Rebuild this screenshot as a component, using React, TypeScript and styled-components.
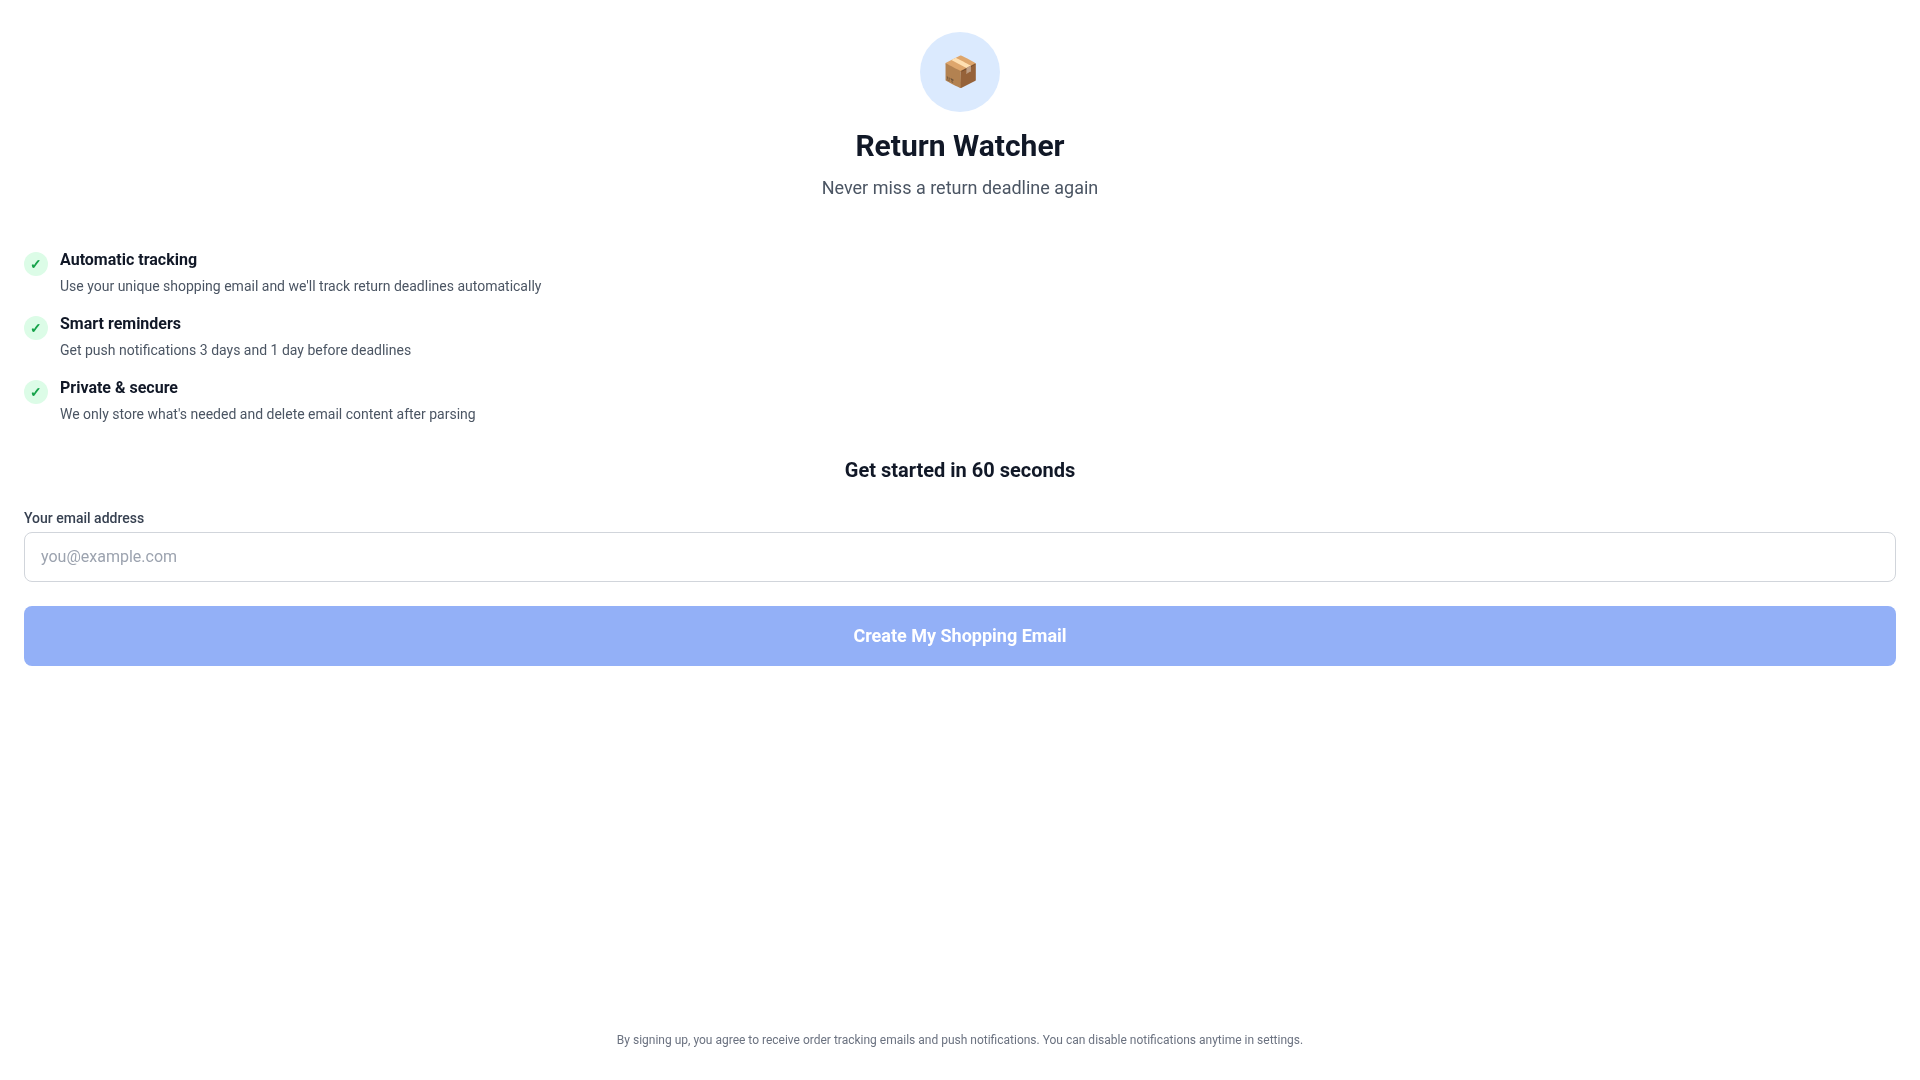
import React from "react";
import styled, { createGlobalStyle } from "styled-components";

const Global = createGlobalStyle`
  * { box-sizing: border-box; }
  html, body { margin: 0; padding: 0; background: #fff; }
  body { font-family: Roboto, "Liberation Sans", sans-serif; -webkit-font-smoothing: antialiased; }
`;
const Page = styled.div`
  min-height: 100vh; display: flex; flex-direction: column; padding: 32px 24px 32px; background: #fff;
  will-change: transform;
`;
const Header = styled.header`
  display: flex; flex-direction: column; align-items: center; margin-bottom: 46px;
`;
const IconCircle = styled.div`
  width: 80px; height: 80px; border-radius: 50%; background: #dbeafe;
  display: flex; align-items: center; justify-content: center; font-size: 30px; line-height: 1; margin-bottom: 16px;
`;
const Title = styled.h1`
  margin: 0 0 10px; font-size: 30px; line-height: 36px; font-weight: 700; color: #111827;
`;
const Subtitle = styled.p`
  margin: 0; font-size: 18px; line-height: 28px; color: #4b5563;
`;
const Features = styled.ul`
  list-style: none; margin: 0 0 32px; padding: 0; display: flex; flex-direction: column; gap: 16px;
`;
const Feature = styled.li`
  display: flex; gap: 12px; align-items: flex-start;
`;
const Check = styled.span`
  width: 24px; height: 24px; border-radius: 50%; background: #dcfce7; color: #16a34a; flex-shrink: 0;
  display: flex; align-items: center; justify-content: center; font-size: 14px; font-weight: 700; margin-top: 4px;
`;
const FeatureTitle = styled.div`
  font-size: 16px; line-height: 24px; font-weight: 700; color: #111827; margin-bottom: 4px;
`;
const FeatureText = styled.div`
  font-size: 14px; line-height: 20px; color: #4b5563;
`;
const SectionTitle = styled.h2`
  margin: 0 0 24px; text-align: center; font-size: 20px; line-height: 28px; font-weight: 700; color: #111827;
`;
const Label = styled.label`
  display: block; font-size: 14px; line-height: 20px; font-weight: 500; color: #374151; margin-bottom: 4px;
`;
const Input = styled.input`
  display: block; width: 100%; height: 50px; padding: 0 16px 2px; border: 1px solid #d1d5db; border-radius: 8px;
  font: 400 16px Roboto, sans-serif; color: #111827; background: #fff; margin-bottom: 24px; outline: none;
  &::placeholder { color: #9ca3af; opacity: 1; }
`;
const Submit = styled.button`
  display: block; width: 100%; height: 60px; border: 0; border-radius: 8px; background: #93b0f7; color: #fff;
  font: 700 18px Roboto, sans-serif; padding: 0 0 2px;
`;
const Footer = styled.p`
  margin: auto 0 0; text-align: center; font-size: 12px; line-height: 16px; color: #6b7280;
`;

const items = [
  ["Automatic tracking", "Use your unique shopping email and we'll track return deadlines automatically"],
  ["Smart reminders", "Get push notifications 3 days and 1 day before deadlines"],
  ["Private & secure", "We only store what's needed and delete email content after parsing"],
];

export default function App() {
  return (
    <Page>
      <Global />
      <Header>
        <IconCircle>📦</IconCircle>
        <Title>Return Watcher</Title>
        <Subtitle>Never miss a return deadline again</Subtitle>
      </Header>
      <Features>
        {items.map(([t, d]) => (
          <Feature key={t}>
            <Check>✓</Check>
            <div>
              <FeatureTitle>{t}</FeatureTitle>
              <FeatureText>{d}</FeatureText>
            </div>
          </Feature>
        ))}
      </Features>
      <SectionTitle>Get started in 60 seconds</SectionTitle>
      <Label htmlFor="email">Your email address</Label>
      <Input id="email" type="email" placeholder="you@example.com" />
      <Submit type="button">Create My Shopping Email</Submit>
      <Footer>By signing up, you agree to receive order tracking emails and push notifications. You can disable notifications anytime in settings.</Footer>
    </Page>
  );
}
